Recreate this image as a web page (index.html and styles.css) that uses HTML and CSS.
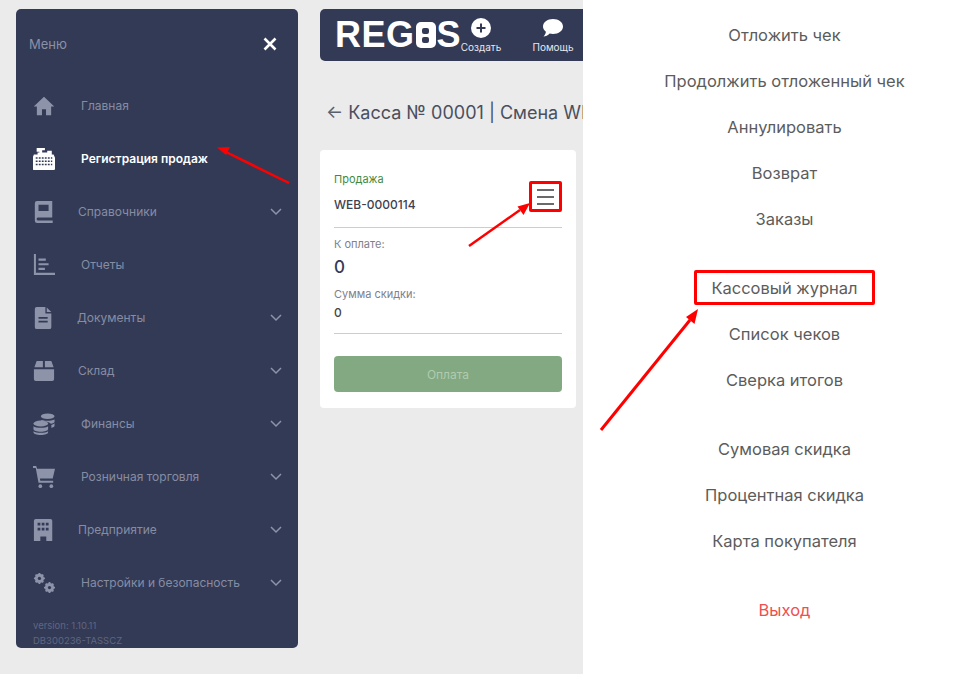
FILE: index.html
```html
<!DOCTYPE html>
<html lang="ru">
<head>
  <meta charset="UTF-8" />
  <title>REGOS - Касса</title>
  <link rel="stylesheet" href="styles.css">
</head>
<body>
  <div class="page">
    <div class="app">
      <aside class="sidebar">
        <div class="sidebar-head">
          <span>Меню</span>
          <svg class="close-icon" viewBox="0 0 14 14" width="14" height="14"><path d="M1.5 1.5l11 11M12.5 1.5l-11 11" stroke="#fff" stroke-width="2.6" fill="none"/></svg>
        </div>
        <nav class="nav">
          <div class="nav-item">
            <svg class="nav-icon" viewBox="0 0 24 24"><path d="M12 2L0.8 12.5h3.4V22h5.6v-6.5h4.4V22h5.6v-9.5h3.4z"/></svg>
            <span class="nav-label">Главная</span>
          </div>
          <div class="nav-item active">
            <svg class="nav-icon" viewBox="0 0 24 24"><path d="M4 0h9v2.5h-3V5h5.500V3h5v4h2l2 5v10a2 2 0 0 1-2 2H1a2 2 0 0 1-2-2V12l2-5h4V5h2V4H4z"/><path d="M3 11h18M3 14.500h18M3 18h18" stroke="#333a56" stroke-width="1.700" stroke-dasharray="2 1.300"/></svg>
            <span class="nav-label">Регистрация продаж</span>
          </div>
          <div class="nav-item tight">
            <svg class="nav-icon" viewBox="0 0 24 24"><path fill-rule="evenodd" d="M2 2.500A2.500 2.500 0 0 1 4.500 0H21v18H5a2 2 0 0 0 0 3.200h16.500V24H4.500A2.500 2.500 0 0 1 2 21.500zM6 4v7h11V4z"/></svg>
            <span class="nav-label">Справочники</span>
            <svg class="chevron" viewBox="0 0 12 8"><path d="M1 1l5 5 5-5"/></svg>
          </div>
          <div class="nav-item">
            <svg class="nav-icon" viewBox="0 0 24 24"><path d="M1 0h2.200v20.500H24V23H1zM6 5h8v2.400H6zM6 10h11v2.400H6zM6 15h7v2.400H6z"/></svg>
            <span class="nav-label">Отчеты</span>
          </div>
          <div class="nav-item tighter">
            <svg class="nav-icon" viewBox="0 0 24 24"><path fill-rule="evenodd" d="M4 0h9.500v7H20v15a2 2 0 0 1-2 2H4a2 2 0 0 1-2-2V2a2 2 0 0 1 2-2zM15 .5L20 5.500h-5zM6 11v1.800h10V11zM6 15v1.800h10V15z"/></svg>
            <span class="nav-label">Документы</span>
            <svg class="chevron" viewBox="0 0 12 8"><path d="M1 1l5 5 5-5"/></svg>
          </div>
          <div class="nav-item tight">
            <svg class="nav-icon" viewBox="0 0 24 24"><path d="M4 1h6.800v7H1.500zM13 1h7l2.500 7H13zM1 10h22v11a2 2 0 0 1-2 2H3a2 2 0 0 1-2-2z"/></svg>
            <span class="nav-label">Склад</span>
            <svg class="chevron" viewBox="0 0 12 8"><path d="M1 1l5 5 5-5"/></svg>
          </div>
          <div class="nav-item">
            <svg class="nav-icon" viewBox="0 0 24 24"><ellipse cx="16" cy="3.500" rx="7.500" ry="3"/><path d="M9 7.500c3 1.200 11 1.200 14.500-.5v2.500c0 1-2 2-4 2.300-2-2-6-3-10.500-3zM20 13c2-.4 3.500-1 3.500-2v3c0 1-1.500 1.800-3.500 2.200z"/><ellipse cx="8.500" cy="11.500" rx="8" ry="3.200"/><path d="M.5 14.500c3 2.200 13 2.200 16 0v3c0 1.800-3.500 3-8 3s-8-1.200-8-3zM.5 20c3 2.200 13 2.200 16 0v1c0 1.800-3.500 3-8 3s-8-1.200-8-3z"/></svg>
            <span class="nav-label">Финансы</span>
            <svg class="chevron" viewBox="0 0 12 8"><path d="M1 1l5 5 5-5"/></svg>
          </div>
          <div class="nav-item">
            <svg class="nav-icon" viewBox="0 0 24 24"><path d="M0 0h3.500l1 3H24l-2.500 10.500H7.500l.5 2.500h14v2.300H6L3 2.200H0z"/><circle cx="8" cy="22" r="2"/><circle cx="20" cy="22" r="2"/></svg>
            <span class="nav-label">Розничная торговля</span>
            <svg class="chevron" viewBox="0 0 12 8"><path d="M1 1l5 5 5-5"/></svg>
          </div>
          <div class="nav-item tight">
            <svg class="nav-icon" viewBox="0 0 24 24"><path fill-rule="evenodd" d="M3 0h16a2 2 0 0 1 2 2v22h-6.500v-5h-6.500v5H1V2a2 2 0 0 1 2-2zM5 4v3h3V4zM9.500 4v3h3V4zM14 4v3h3V4zM5 9.500v3h3v-3zM9.500 9.500v3h3v-3zM14 9.500v3h3v-3z"/></svg>
            <span class="nav-label">Предприятие</span>
            <svg class="chevron" viewBox="0 0 12 8"><path d="M1 1l5 5 5-5"/></svg>
          </div>
          <div class="nav-item">
            <svg class="nav-icon" viewBox="0 0 24 24"><circle cx="7" cy="7" r="3.500" fill="none" stroke-width="3" class="gear"/><path class="gear" d="M7 1v12M1 7h12M2.800 2.800l8.400 8.400M11.200 2.800l-8.400 8.400" stroke-width="2"/><circle cx="18" cy="17" r="3.500" fill="none" stroke-width="3" class="gear"/><path class="gear" d="M18 11v12M12 17h12M13.800 12.800l8.400 8.400M22.200 12.800l-8.400 8.400" stroke-width="2"/><circle cx="7" cy="7" r="1.800" fill="#333a56"/><circle cx="18" cy="17" r="1.800" fill="#333a56"/></svg>
            <span class="nav-label">Настройки и безопасность</span>
            <svg class="chevron" viewBox="0 0 12 8"><path d="M1 1l5 5 5-5"/></svg>
          </div>
        </nav>
        <div class="version">
          <div>version: 1.10.11</div>
          <div>DB300236-TASSCZ</div>
        </div>
      </aside>

      <main class="content">
        <header class="topbar">
          <div class="logo">REG<span class="logo-o"><i></i><i></i></span>S</div>
          <div class="top-action">
            <svg viewBox="0 0 20 20" width="20" height="20"><circle cx="10" cy="10" r="10" fill="#fff"/><path d="M10 5.500v9M5.500 10h9" stroke="#333a56" stroke-width="2"/></svg>
            <span>Создать</span>
          </div>
          <div class="top-action">
            <svg viewBox="0 0 22 20" width="22" height="20"><path d="M11 1c5.700 0 10 3.200 10 7.500S16.700 16 11 16c-1.200 0-2.300-.1-3.300-.4C6 17.500 3.500 18.500 1.500 18.500c1.300-1.200 2.300-3 2.400-4.800C2 12.300 1 10.500 1 8.500 1 4.200 5.300 1 11 1z" fill="#fff"/></svg>
            <span>Помощь</span>
          </div>
        </header>
        <h2 class="title"><span class="back">←</span> Касса № 00001 | Смена WEB-0000114</h2>
        <section class="card">
          <div class="sale-row">
            <div>
              <div class="sale-label">Продажа</div>
              <div class="sale-number">WEB-0000114</div>
            </div>
            <button class="burger"><i></i><i></i><i></i></button>
          </div>
          <div class="field-label">К оплате:</div>
          <div class="pay-value">0</div>
          <div class="field-label">Сумма скидки:</div>
          <div class="discount-value">0</div>
          <button class="pay-btn">Оплата</button>
        </section>
      </main>
    </div>

    <div class="menu">
      <div class="menu-group">
        <div class="menu-item">Отложить чек</div>
        <div class="menu-item">Продолжить отложенный чек</div>
        <div class="menu-item">Аннулировать</div>
        <div class="menu-item">Возврат</div>
        <div class="menu-item">Заказы</div>
      </div>
      <div class="menu-group">
        <div class="menu-item"><span class="marked">Кассовый журнал</span></div>
        <div class="menu-item">Список чеков</div>
        <div class="menu-item">Сверка итогов</div>
      </div>
      <div class="menu-group">
        <div class="menu-item">Сумовая скидка</div>
        <div class="menu-item">Процентная скидка</div>
        <div class="menu-item">Карта покупателя</div>
      </div>
      <div class="menu-group">
        <div class="menu-item exit">Выход</div>
      </div>
    </div>

    <!-- red annotation arrows on top of the screenshot -->
    <svg class="arrows" viewBox="0 0 974 676" width="974" height="676">
      <g stroke="#f00" stroke-width="2.500" fill="#f00">
        <path d="M289 183L226 152"/><path d="M217 147.500l13-.5-4 8z" stroke="none"/>
        <path d="M469 246L520 210"/><path d="M530 203l-6.500 12-6-8.500z" stroke="none"/>
        <path d="M601 430L690 320" stroke-width="3"/><path d="M698 309l-3.500 15-8.500-7z" stroke="none"/>
      </g>
    </svg>
  </div>
</body>
</html>
```
FILE: styles.css
```css
* {
  box-sizing: border-box;
}
html, body {
  margin: 0;
  padding: 0;
  background: #fff;
}
body {
  font-family: Inter, "Noto Sans", sans-serif;
  color: #333a56;
}
.page {
  position: relative;
  display: flex;
  width: 974px;
  height: 676px;
  overflow: hidden;
}
.app {
  display: flex;
  gap: 22px;
  width: 583px;
  height: 674px;
  padding: 9px 0 0 16px;
  background: #ebebeb;
  overflow: hidden;
  flex-shrink: 0;
}

/* sidebar */
.sidebar {
  display: flex;
  flex-direction: column;
  width: 282px;
  height: 639px;
  padding: 0 16px 0 17px;
  background: #333a56;
  border-radius: 5px;
  flex-shrink: 0;
}
.sidebar-head {
  display: flex;
  justify-content: space-between;
  align-items: center;
  height: 70px;
  padding: 0 4px 0 -4px;
  margin-left: -4px;
  font-size: 13px;
  color: #8a90a6;
}
.close-icon {
  margin-right: 5px;
}
.nav {
  display: flex;
  flex-direction: column;
}
.nav-item {
  display: flex;
  align-items: center;
  height: 53px;
  font-size: 12px;
  color: #868da3;
}
.nav-item.active {
  color: #fff;
  font-weight: 600;
}
.nav-icon {
  width: 22px;
  height: 22px;
  margin-right: 26px;
  fill: #8d93a9;
  flex-shrink: 0;
}
.active .nav-icon {
  fill: #fff;
}
.tight .nav-icon {
  margin-right: 23px;
}
.tighter .nav-icon {
  margin-right: 22px;
}
.gear {
  stroke: #8d93a9;
}
.nav-label {
  flex: 1;
}
.chevron {
  width: 12px;
  height: 8px;
  fill: none;
  stroke: #8d93a9;
  stroke-width: 1.500;
}
.version {
  margin-top: 9px;
  font-size: 9.500px;
  line-height: 15px;
  color: #5f6680;
}

/* main column */
.content {
  display: flex;
  flex-direction: column;
  width: 300px;
  flex-shrink: 0;
}
.topbar {
  display: flex;
  align-items: center;
  width: 300px;
  height: 52px;
  padding-left: 15px;
  background: #333a56;
  border-radius: 5px;
  color: #fff;
}
.logo {
  display: flex;
  align-items: center;
  width: 130px;
  font-family: "Liberation Sans", sans-serif;
  font-size: 36px;
  font-weight: 700;
  letter-spacing: 0.500px;
  color: #fff;
}
.logo-o {
  display: inline-flex;
  flex-direction: column;
  align-items: center;
  justify-content: center;
  gap: 3px;
  width: 20px;
  height: 26px;
  margin: 0 1px 0 1px;
  background: #fff;
  border-radius: 5px;
}
.logo-o i {
  display: block;
  width: 7px;
  height: 6px;
  background: #333a56;
  border-radius: 2px;
}
.top-action {
  display: flex;
  flex-direction: column;
  align-items: center;
  gap: 3px;
  width: 72px;
  margin-left: -20px;
  margin-right: 20px;
  font-size: 10px;
  color: #e6e8ee;
}
.title {
  margin: 40px 0 0 6px;
  height: 49px;
  font-size: 18px;
  font-weight: 400;
  line-height: 24px;
  color: #4a4f5f;
  white-space: nowrap;
}
.back {
  color: #5a5f6e;
}

/* sale card */
.card {
  width: 256px;
  height: 258px;
  padding: 21px 14px 0;
  background: #fff;
  border-radius: 4px;
}
.sale-row {
  display: flex;
  justify-content: space-between;
  align-items: flex-start;
  height: 57px;
  border-bottom: 1px solid #c9ccd9;
}
.sale-label {
  font-size: 11px;
  line-height: 16px;
  color: #3f8a3f;
}
.sale-number {
  margin-top: 10px;
  font-size: 12px;
  line-height: 16px;
  font-weight: 500;
  color: #3c4150;
}
.burger {
  display: flex;
  flex-direction: column;
  justify-content: center;
  gap: 5px;
  width: 33px;
  height: 31px;
  margin: 10px 0 0;
  padding: 0 5px;
  background: #fff;
  border: 3px solid #f00;
  border-radius: 2px;
}
.burger i {
  display: block;
  height: 2px;
  background: #6a6a6a;
}
.field-label {
  margin-top: 9px;
  font-size: 11px;
  line-height: 14px;
  color: #7e818c;
}
.pay-value {
  margin-top: 5px;
  font-size: 17px;
  font-weight: 500;
  line-height: 22px;
  color: #333a56;
}
.discount-value {
  padding: 5px 0 13px;
  font-size: 12px;
  font-weight: 500;
  line-height: 14px;
  color: #444;
  border-bottom: 1px solid #c9ccd9;
}
.pay-btn {
  display: block;
  width: 228px;
  height: 36px;
  margin-top: 22px;
  background: #82a981;
  border: none;
  border-radius: 4px;
  font-family: inherit;
  font-size: 12px;
  color: #b1cbb0;
}

/* right menu */
.menu {
  display: flex;
  flex-direction: column;
  gap: 23px;
  flex: 1;
  padding: 12px 0 0 12px;
  font-size: 16.500px;
  color: #5c5c5c;
  text-align: center;
}
.menu-item {
  height: 46px;
  line-height: 46px;
}
.marked {
  display: inline-block;
  width: 181px;
  height: 35px;
  line-height: 30px;
  border: 3px solid #f00;
  border-radius: 2px;
}
.exit {
  color: #ef4f4f;
}
.arrows {
  position: absolute;
  left: 0;
  top: 0;
  pointer-events: none;
}
```
